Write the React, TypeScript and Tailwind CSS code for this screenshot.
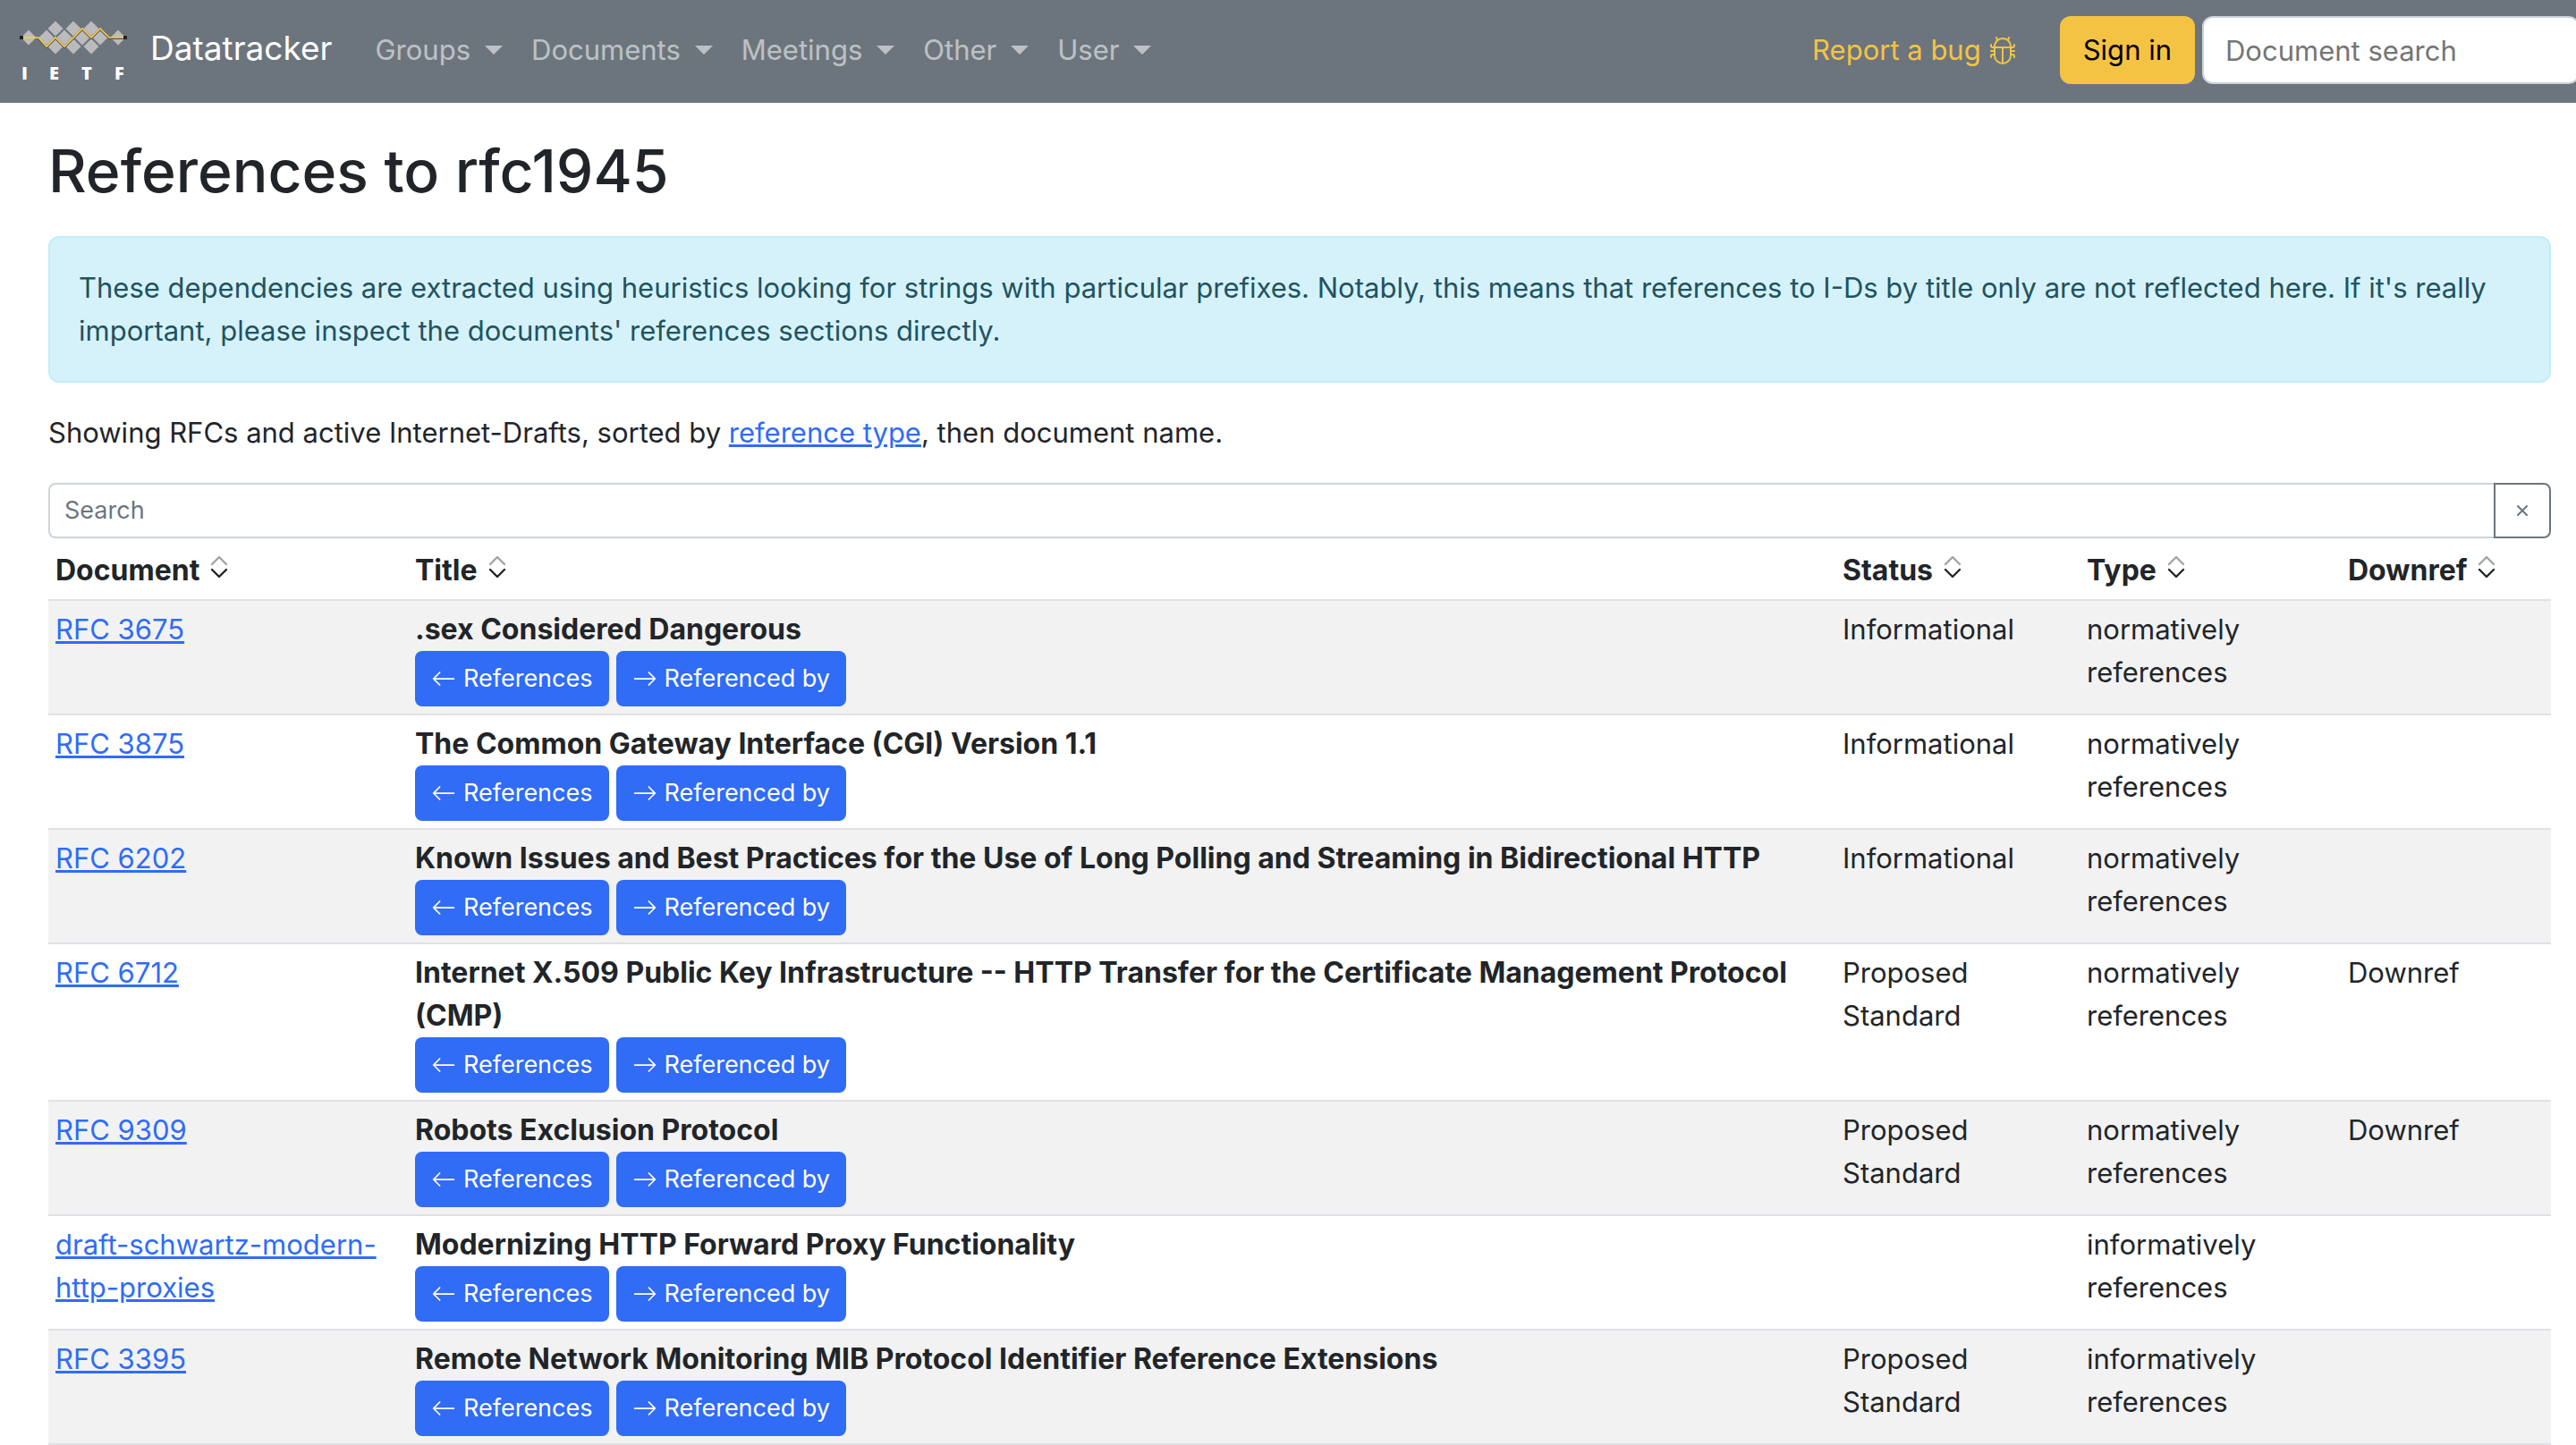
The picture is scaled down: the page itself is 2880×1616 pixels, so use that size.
import { BsArrowLeft, BsArrowRight, BsBug } from "react-icons/bs";

const menus = ["Groups", "Documents", "Meetings", "Other", "User"];
const columns = [
  { name: "Document", width: "w-[402px]" },
  { name: "Title", width: "" },
  { name: "Status", width: "w-[273px]" },
  { name: "Type", width: "w-[292px]" },
  { name: "Downref", width: "w-[235px]" },
];
const rows = [
  { doc: "RFC 3675", title: ".sex Considered Dangerous", status: "Informational", type: "normatively references", downref: "" },
  { doc: "RFC 3875", title: "The Common Gateway Interface (CGI) Version 1.1", status: "Informational", type: "normatively references", downref: "" },
  { doc: "RFC 6202", title: "Known Issues and Best Practices for the Use of Long Polling and Streaming in Bidirectional HTTP", status: "Informational", type: "normatively references", downref: "" },
  { doc: "RFC 6712", title: "Internet X.509 Public Key Infrastructure -- HTTP Transfer for the Certificate Management Protocol (CMP)", status: "Proposed Standard", type: "normatively references", downref: "Downref" },
  { doc: "RFC 9309", title: "Robots Exclusion Protocol", status: "Proposed Standard", type: "normatively references", downref: "Downref" },
  { doc: "draft-schwartz-modern-http-proxies", title: "Modernizing HTTP Forward Proxy Functionality", status: "", type: "informatively references", downref: "" },
  { doc: "RFC 3395", title: "Remote Network Monitoring MIB Protocol Identifier Reference Extensions", status: "Proposed Standard", type: "informatively references", downref: "" },
];

const diamonds = [
  [10, 19], [110, 19], [30, 19], [50, 19], [70, 19], [90, 19],
  [40, 9], [60, 9], [80, 9], [40, 29], [60, 29], [80, 29],
];

function Logo() {
  return (
    <svg viewBox="0 -8 120 82" className="h-[82px] w-[120px] shrink-0" role="img" aria-label="IETF">
      <g fill="#bbbbbd">
        {diamonds.map(([x, y]) => (
          <path key={`${x}-${y}`} d={`M${x} ${y - 8.500}l8.500 8.500-8.500 8.500-8.500-8.500z`} />
        ))}
      </g>
      <path d="M21 20l9 10 10-10 10 10 20-20 10 10 10-10 10 10h16" fill="none" stroke="#555" strokeWidth="2" />
      <path d="M4 19h17l9 10 10-10 10 10 20-20 10 10 10-10 10 10h16" fill="none" stroke="#f7cd46" strokeWidth="1.600" />
      <path d="M0 17h4v4H0zM116 17h4v4h-4z" fill="#222" />
      <g fill="#fff" fontFamily="Open Sans" fontWeight="800" fontSize="20">
        <text x="2" y="66">I</text>
        <text x="33" y="66">E</text>
        <text x="69" y="66">T</text>
        <text x="106" y="66">F</text>
      </g>
    </svg>
  );
}

function SortIcon() {
  return (
    <svg
      viewBox="0 0 20 26"
      className="mb-0.5 ml-3 inline-block h-[26px] w-5 align-baseline"
      fill="none"
      strokeWidth="2.400"
      strokeLinecap="round"
      strokeLinejoin="round"
      aria-hidden="true"
    >
      <path d="M2 10l8-8 8 8" stroke="#a3a3a3" />
      <path d="M2 16l8 8 8-8" stroke="#212529" />
    </svg>
  );
}

const pill =
  "inline-flex h-[62px] items-center gap-2 rounded-lg bg-[#306cf6] px-[18px] text-[27px] leading-[42px] text-white";

export default function App() {
  return (
    <div className="min-h-screen overflow-x-hidden bg-white font-['Inter',sans-serif] text-[31px] leading-[48px] text-[#212529]">
      <header className="flex h-[115px] items-center bg-[#6c757d] pb-[3px] pl-[22px]">
        <a href="#" className="flex items-center gap-[26px] text-[37px] leading-[60px] text-white">
          <Logo />
          <span className="pb-1">Datatracker</span>
        </a>
        <nav className="ml-8 flex flex-1" aria-label="Main">
          {menus.map((m) => (
            <button key={m} type="button" className="flex items-center gap-4 px-4 text-white/55">
              {m}
              <svg viewBox="0 0 20 10" className="h-[10px] w-5" aria-hidden="true">
                <path d="M0 0h20L10 10z" fill="currentColor" />
              </svg>
            </button>
          ))}
        </nav>
        <a href="#" className="mr-12 flex items-center gap-2 text-[#f5c344]">
          Report a bug
          <BsBug className="size-8" />
        </a>
        <button type="button" className="mr-2 h-[76px] rounded-xl bg-[#f5c344] px-[26px] text-black">
          Sign in
        </button>
        <input
          type="search"
          aria-label="Document search"
          placeholder="Document search"
          className="-mr-1 h-[76px] w-[422px] rounded-xl border-2 border-[#ced4da] bg-white px-6 placeholder:text-[#757575]"
        />
      </header>

      <main className="pr-7 pl-[54px]">
        <h1 className="pt-[38px] text-[66px] leading-[76px] font-medium">References to rfc1945</h1>
        <p className="mt-[35px] rounded-xl border-2 border-[#c2edf7] bg-[#d5f2fa] p-8 text-[#22525f]">
          These dependencies are extracted using heuristics looking for strings with particular prefixes. Notably, this
          means that references to I-Ds by title only are not reflected here. If it's really important, please inspect
          the documents' references sections directly.
        </p>
        <p className="mt-8">
          Showing RFCs and active Internet-Drafts, sorted by{" "}
          <a href="#" className="text-[#306cf6] underline">reference type</a>, then document name.
        </p>
        <div className="mt-8 flex h-[62px] text-[27px]">
          <input
            type="search"
            aria-label="Search"
            placeholder="Search"
            className="min-w-0 flex-1 rounded-l-lg border-2 border-r-0 border-[#ced4da] px-4 placeholder:text-[#6c757d]"
          />
          <button type="button" aria-label="Clear search" className="flex w-16 items-center justify-center rounded-r-lg border-2 border-[#6c757d] text-[#6c757d]">
            <svg viewBox="0 0 12 12" className="size-3" aria-hidden="true">
              <path d="m1 1 10 10M11 1 1 11" stroke="currentColor" strokeWidth="2" strokeLinecap="round" />
            </svg>
          </button>
        </div>
        <table className="mt-1 w-full table-fixed border-collapse text-left">
          <thead>
            <tr className="border-b-2 border-[#dee2e6]">
              {columns.map((c) => (
                <th key={c.name} scope="col" className={`${c.width} p-2 text-[32px] leading-[48px] font-bold`}>
                  {c.name}
                  <SortIcon />
                </th>
              ))}
            </tr>
          </thead>
          <tbody>
            {rows.map((r) => (
              <tr key={r.doc} className="border-b-2 border-[#dee2e6] align-top odd:bg-[#f2f2f2]">
                <td className="p-2"><a href="#" className="text-[#306cf6] underline">{r.doc}</a></td>
                <td className="p-2">
                  <div className="text-[32px] leading-[48px] font-bold">{r.title}</div>
                  <div className="flex gap-2">
                    <a href="#" className={pill}><BsArrowLeft className="size-7" />References</a>
                    <a href="#" className={pill}><BsArrowRight className="size-7" />Referenced by</a>
                  </div>
                </td>
                <td className="p-2">{r.status}</td>
                <td className="p-2">{r.type}</td>
                <td className="p-2">{r.downref}</td>
              </tr>
            ))}
          </tbody>
        </table>
      </main>
    </div>
  );
}
